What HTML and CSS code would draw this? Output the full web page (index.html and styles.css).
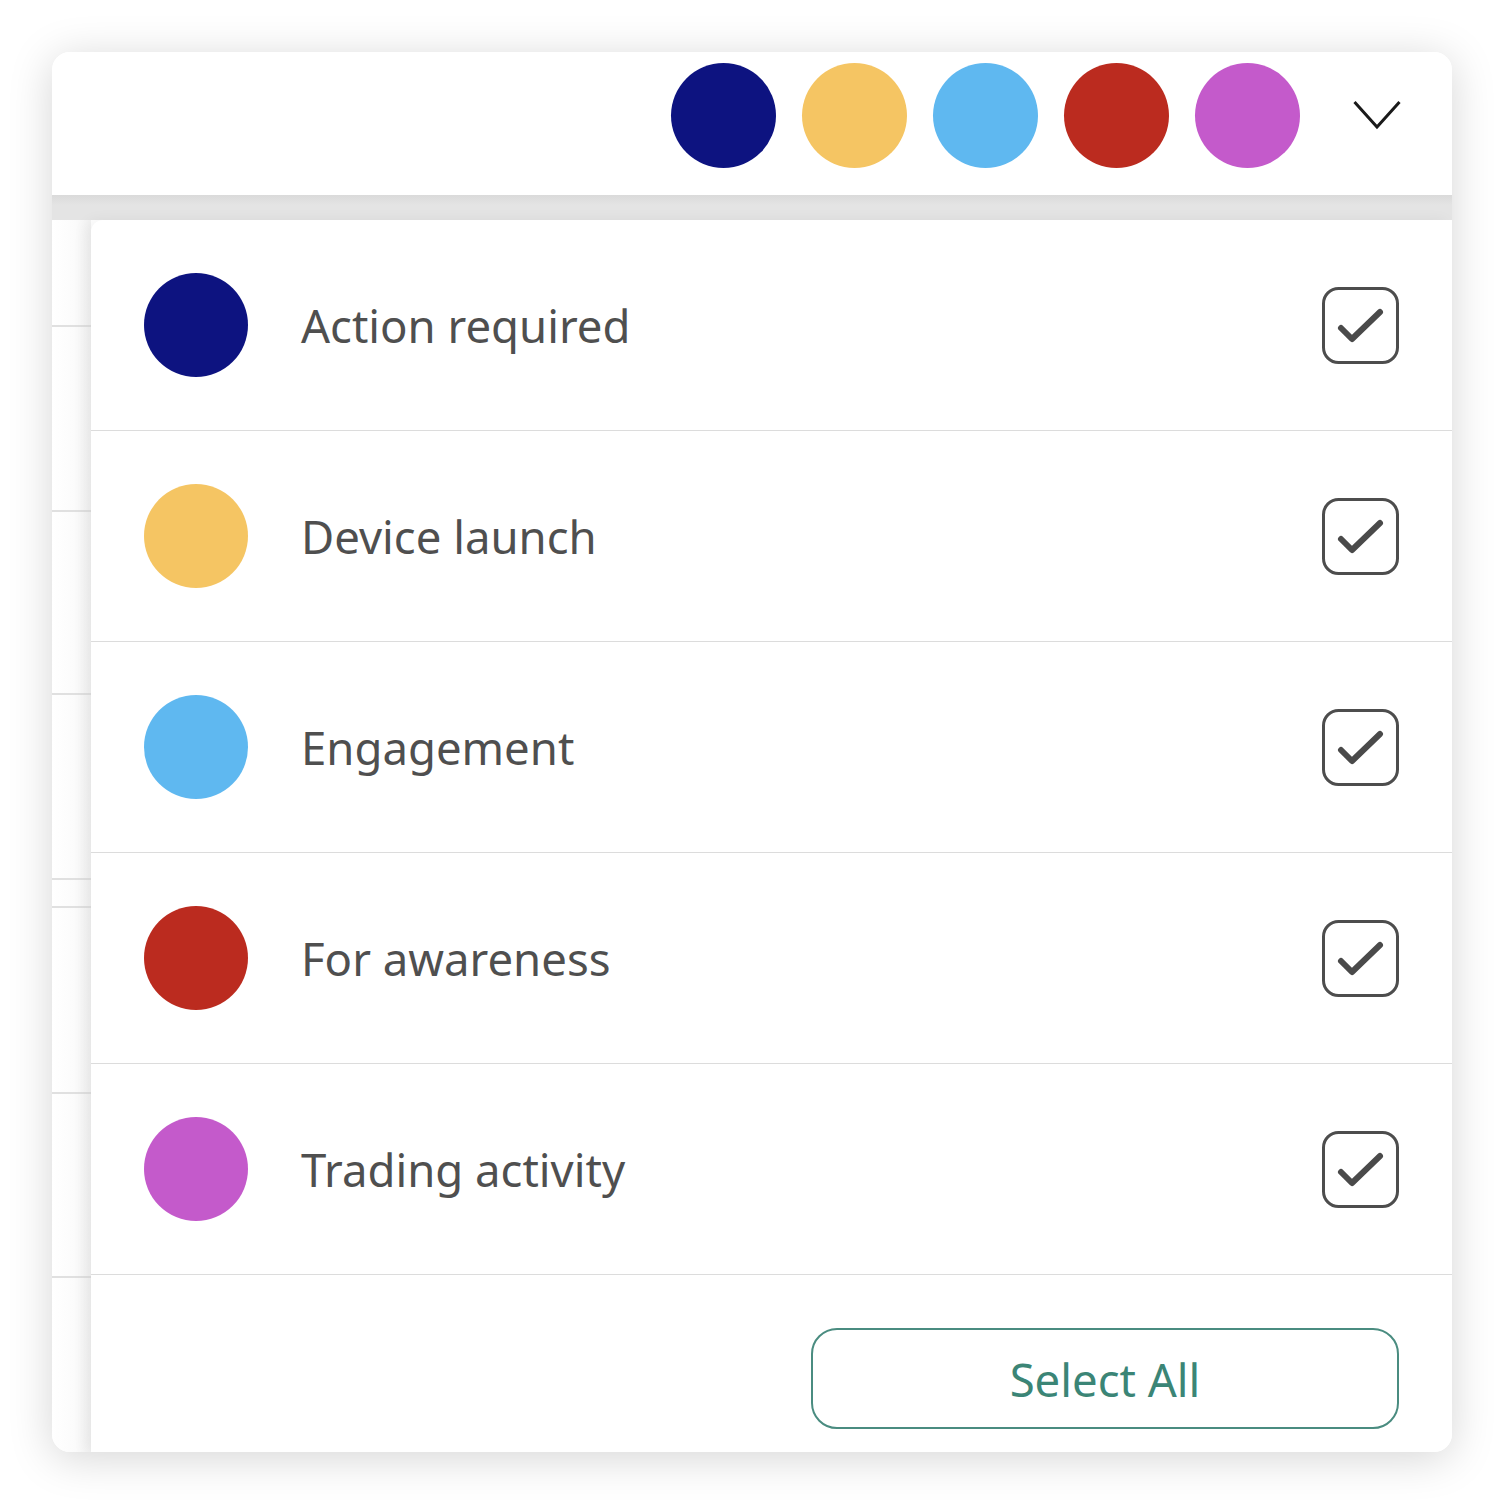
FILE: index.html
```html
<!DOCTYPE html>
<html lang="en">
<head>
<meta charset="utf-8">
<title>Filter</title>
<link rel="stylesheet" href="styles.css">
</head>
<body>
<div class="card">
  <header class="header">
    <span class="dot navy big"></span>
    <span class="dot yellow big"></span>
    <span class="dot sky big"></span>
    <span class="dot red big"></span>
    <span class="dot purple big"></span>
    <svg class="chevron" width="48" height="30" viewBox="0 0 48 30"><path d="M1.5 2 L24 27 L46.5 2" fill="none" stroke="#1a1a1a" stroke-width="3"/></svg>
  </header>
  <div class="band"></div>
  <div class="content">
    <div class="strip">
      <div class="r r1"></div>
      <div class="r r2"></div>
      <div class="r r3"></div>
      <div class="r r4"></div>
      <div class="r r5"></div>
      <div class="r r6"></div>
      <div class="r r7"></div>
    </div>
    <div class="panel">
      <div class="row">
        <span class="dot navy"></span>
        <span class="label">Action required</span>
        <svg class="check" width="77" height="77" viewBox="0 0 77 77"><rect x="1.5" y="1.5" width="74" height="74" rx="15" fill="none" stroke="#4d4d4d" stroke-width="3"/><path d="M19 41 L30 52 L58 25" fill="none" stroke="#4a4a4a" stroke-width="6" stroke-linecap="round" stroke-linejoin="round"/></svg>
      </div>
      <div class="row">
        <span class="dot yellow"></span>
        <span class="label">Device launch</span>
        <svg class="check" width="77" height="77" viewBox="0 0 77 77"><rect x="1.5" y="1.5" width="74" height="74" rx="15" fill="none" stroke="#4d4d4d" stroke-width="3"/><path d="M19 41 L30 52 L58 25" fill="none" stroke="#4a4a4a" stroke-width="6" stroke-linecap="round" stroke-linejoin="round"/></svg>
      </div>
      <div class="row">
        <span class="dot sky"></span>
        <span class="label">Engagement</span>
        <svg class="check" width="77" height="77" viewBox="0 0 77 77"><rect x="1.5" y="1.5" width="74" height="74" rx="15" fill="none" stroke="#4d4d4d" stroke-width="3"/><path d="M19 41 L30 52 L58 25" fill="none" stroke="#4a4a4a" stroke-width="6" stroke-linecap="round" stroke-linejoin="round"/></svg>
      </div>
      <div class="row">
        <span class="dot red"></span>
        <span class="label">For awareness</span>
        <svg class="check" width="77" height="77" viewBox="0 0 77 77"><rect x="1.5" y="1.5" width="74" height="74" rx="15" fill="none" stroke="#4d4d4d" stroke-width="3"/><path d="M19 41 L30 52 L58 25" fill="none" stroke="#4a4a4a" stroke-width="6" stroke-linecap="round" stroke-linejoin="round"/></svg>
      </div>
      <div class="row">
        <span class="dot purple"></span>
        <span class="label">Trading activity</span>
        <svg class="check" width="77" height="77" viewBox="0 0 77 77"><rect x="1.5" y="1.5" width="74" height="74" rx="15" fill="none" stroke="#4d4d4d" stroke-width="3"/><path d="M19 41 L30 52 L58 25" fill="none" stroke="#4a4a4a" stroke-width="6" stroke-linecap="round" stroke-linejoin="round"/></svg>
      </div>
      <div class="footer">
        <button class="select-all">Select All</button>
      </div>
    </div>
  </div>
</div>
</body>
</html>
```

FILE: styles.css
```css
html, body {
  margin: 0;
  padding: 0;
  background: #ffffff;
}

body {
  font-family: "Noto Sans", "Open Sans", sans-serif;
}

.card {
  margin: 52px;
  width: 1400px;
  height: 1400px;
  border-radius: 18px;
  overflow: hidden;
  background: #ffffff;
  box-shadow: 0 6px 44px rgba(0, 0, 0, 0.17);
  display: flex;
  flex-direction: column;
}

.header {
  height: 126px;
  padding-bottom: 17px;
  flex: none;
  display: flex;
  align-items: center;
  justify-content: flex-end;
  padding-right: 51px;
  background: #ffffff;
}

.header .dot + .dot {
  margin-left: 26px;
}

.chevron {
  margin-left: 53px;
  display: block;
}

.band {
  height: 25px;
  flex: none;
  background: linear-gradient(#dadada, #e4e4e4 40%, #e4e4e4);
}

.content {
  flex: 1;
  display: flex;
  min-height: 0;
}

.strip {
  width: 39px;
  flex: none;
  background: linear-gradient(90deg, #ffffff, #fbfbfb 60%, #f2f2f2);
  display: flex;
  flex-direction: column;
}

.r {
  border-bottom: 2px solid #e0e0e0;
  flex: none;
}
.r1 { height: 105px; }
.r2 { height: 183px; }
.r3 { height: 181px; }
.r4 { height: 183px; }
.r5 { height: 26px; }
.r6 { height: 184px; }
.r7 { height: 182px; }

.panel {
  flex: 1;
  background: #ffffff;
  border-top-left-radius: 12px;
  box-shadow: -6px 0 14px rgba(0, 0, 0, 0.05);
  display: flex;
  flex-direction: column;
  position: relative;
}

.row {
  height: 210px;
  flex: none;
  border-bottom: 1px solid #dcdcdc;
  display: flex;
  align-items: center;
  padding: 0 53px;
}

.dot {
  width: 105px;
  height: 105px;
  border-radius: 50%;
  flex: none;
  display: block;
}

.row .dot {
  width: 104px;
  height: 104px;
}

.navy { background: #0d1380; }
.yellow { background: #f5c563; }
.sky { background: #5fb8f0; }
.red { background: #bb2b1f; }
.purple { background: #c45acb; }

.label {
  margin-left: 53px;
  flex: 1;
  font-size: 45.5px;
  color: #4f4f4f;
}

.check {
  display: block;
  flex: none;
}

.footer {
  flex: 1;
  display: flex;
  justify-content: flex-end;
  align-items: flex-start;
  padding: 53px 53px 0 0;
}

.select-all {
  width: 588px;
  height: 101px;
  border: 2px solid #4a8c80;
  border-radius: 26px;
  background: #ffffff;
  color: #3b8576;
  font-family: "Noto Sans", "Open Sans", sans-serif;
  font-size: 45.5px;
  padding: 0;
}
```
